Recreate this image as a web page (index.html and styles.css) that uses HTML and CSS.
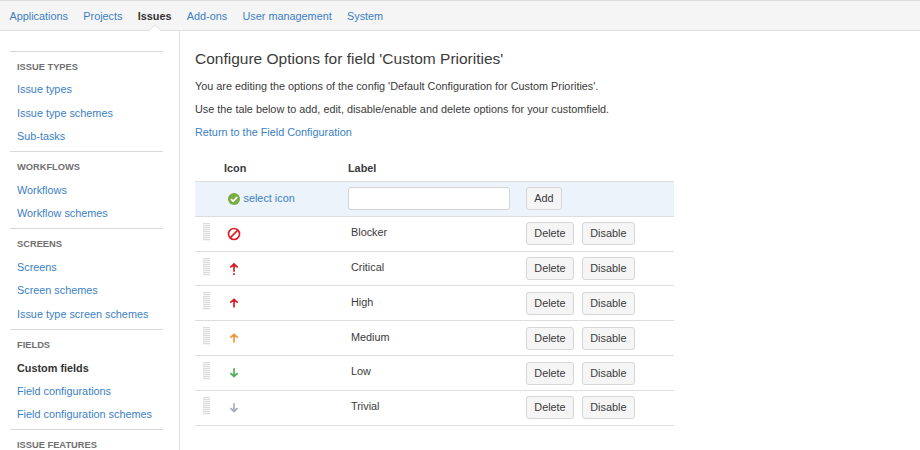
FILE: index.html
```
<!DOCTYPE html>
<html lang="en">
<head>
<meta charset="utf-8">
<title>Configure Options</title>
<link rel="stylesheet" href="styles.css">
</head>
<body>
<header class="topnav">
  <a href="#">Applications</a>
  <a href="#">Projects</a>
  <a href="#" class="active">Issues<svg class="notch" width="14" height="8" viewBox="0 0 14 8"><path d="M0.5 7 L7 .8 L13.5 7 V8 H.5Z" fill="#fff"/><path d="M0.5 7 L7 .8 L13.5 7" fill="none" stroke="#e0e0e0"/></svg></a>
  <a href="#">Add-ons</a>
  <a href="#">User management</a>
  <a href="#">System</a>
</header>
<div class="page">
  <nav class="sidebar">
    <section class="group">
      <h2>ISSUE TYPES</h2>
      <a href="#">Issue types</a>
      <a href="#">Issue type schemes</a>
      <a href="#">Sub-tasks</a>
    </section>
    <section class="group">
      <h2>WORKFLOWS</h2>
      <a href="#">Workflows</a>
      <a href="#">Workflow schemes</a>
    </section>
    <section class="group">
      <h2>SCREENS</h2>
      <a href="#">Screens</a>
      <a href="#">Screen schemes</a>
      <a href="#">Issue type screen schemes</a>
    </section>
    <section class="group">
      <h2>FIELDS</h2>
      <a href="#" class="current">Custom fields</a>
      <a href="#">Field configurations</a>
      <a href="#">Field configuration schemes</a>
    </section>
    <section class="group">
      <h2>ISSUE FEATURES</h2>
    </section>
  </nav>
  <main class="content">
    <h1>Configure Options for field 'Custom Priorities'</h1>
    <p>You are editing the options of the config 'Default Configuration for Custom Priorities'.</p>
    <p>Use the tale below to add, edit, disable/enable and delete options for your customfield.</p>
    <p><a href="#">Return to the Field Configuration</a></p>
    <div class="table">
      <div class="row head"><span></span><b>Icon</b><b>Label</b><span></span></div>
      <div class="row add">
        <span></span>
        <a href="#" class="select"><svg width="12" height="12" viewBox="0 0 12 12"><circle cx="6" cy="6" r="6" fill="#78ad41"/><path d="M3 6.2 L5.2 8.3 L9.2 4" fill="none" stroke="#fff" stroke-width="1.8"/></svg>select icon</a>
        <input type="text" aria-label="Label">
        <div class="actions"><button>Add</button></div>
      </div>
      <div class="row">
        <i class="grip"></i>
        <svg class="icon" width="14" height="14" viewBox="0 0 14 14" fill="none" stroke="#df1f26" stroke-width="1.7"><circle cx="7" cy="7" r="5.5"/><path d="M3.2 10.8 L10.8 3.2"/></svg>
        <span class="label">Blocker</span>
        <div class="actions"><button>Delete</button><button>Disable</button></div>
      </div>
      <div class="row">
        <i class="grip"></i>
        <svg class="icon" width="14" height="14" viewBox="0 0 14 14" fill="none" stroke="#d8202c" stroke-width="1.7"><path d="M7 9.8 V2 M3.3 5.3 L7 2 L10.7 5.3 M7 11.2 V13"/><path d="M4.6 4.8 L7 2.4 L9.4 4.8Z" fill="#d8202c" stroke="none"/></svg>
        <span class="label">Critical</span>
        <div class="actions"><button>Delete</button><button>Disable</button></div>
      </div>
      <div class="row">
        <i class="grip"></i>
        <svg class="icon" width="14" height="14" viewBox="0 0 14 14" fill="none" stroke="#d8202c" stroke-width="1.7"><path d="M7 11.6 V3.2 M3.3 6.6 L7 3.3 L10.7 6.6"/><path d="M4.6 6.1 L7 3.7 L9.4 6.1Z" fill="#d8202c" stroke="none"/></svg>
        <span class="label">High</span>
        <div class="actions"><button>Delete</button><button>Disable</button></div>
      </div>
      <div class="row">
        <i class="grip"></i>
        <svg class="icon" width="14" height="14" viewBox="0 0 14 14" fill="none" stroke="#f0953a" stroke-width="1.7"><path d="M7 11.6 V3.2 M3.3 6.6 L7 3.3 L10.7 6.6"/><path d="M4.6 6.1 L7 3.7 L9.4 6.1Z" fill="#f0953a" stroke="none"/></svg>
        <span class="label">Medium</span>
        <div class="actions"><button>Delete</button><button>Disable</button></div>
      </div>
      <div class="row">
        <i class="grip"></i>
        <svg class="icon" width="14" height="14" viewBox="0 0 14 14" fill="none" stroke="#58b05c" stroke-width="1.7"><path d="M7 2.2 V10.6 M3.3 7.2 L7 10.5 L10.7 7.2"/><path d="M4.6 7.7 L7 10.1 L9.4 7.7Z" fill="#58b05c" stroke="none"/></svg>
        <span class="label">Low</span>
        <div class="actions"><button>Delete</button><button>Disable</button></div>
      </div>
      <div class="row">
        <i class="grip"></i>
        <svg class="icon" width="14" height="14" viewBox="0 0 14 14" fill="none" stroke="#a9aebb" stroke-width="1.7"><path d="M7 2.2 V10.6 M3.3 7.2 L7 10.5 L10.7 7.2"/><path d="M4.6 7.7 L7 10.1 L9.4 7.7Z" fill="#a9aebb" stroke="none"/></svg>
        <span class="label">Trivial</span>
        <div class="actions"><button>Delete</button><button>Disable</button></div>
      </div>
    </div>
  </main>
</div>
</body>
</html>
```
FILE: styles.css
```
* { box-sizing: border-box; }
body {
  margin: 0;
  height: 450px;
  overflow: hidden;
  background: #fff;
  color: #3b3b3b;
  font: 10.85px/23.2px "Liberation Sans", Arial, sans-serif;
}
a { color: #3b7fc4; text-decoration: none; }
.topnav {
  display: flex;
  gap: 15.3px;
  height: 31px;
  padding-left: 9.5px;
  line-height: 30px;
  background: #f5f5f5;
  border-top: 1px solid #dcdcdc;
  border-bottom: 1px solid #e0e0e0;
}
.topnav .active { position: relative; color: #333; font-weight: bold; }
.notch { position: absolute; left: 50%; bottom: -2px; margin-left: -7px; }
.page { display: flex; height: 419px; }
.sidebar {
  width: 180px;
  padding: 19.6px 16px 0 9.5px;
  border-right: 1px solid #e0e0e0;
}
.group {
  padding: 5px 0 3px 7.5px;
  border-top: 1px solid #d9d9d9;
}
.group h2 {
  margin: 0;
  height: 21.9px;
  line-height: 21px;
  font-size: 9.3px;
  color: #707070;
}
.group a { display: block; height: 23.2px; }
.group .current { color: #333; font-weight: bold; }
.content { padding: 16px 0 0 15px; }
h1 {
  margin: 0 0 4.5px;
  font-size: 15.5px;
  line-height: 23px;
  font-weight: normal;
}
p { margin: 0; height: 23.2px; }
.table { width: 479px; margin-top: 6.8px; }
.row {
  display: grid;
  grid-template-columns: 29px 124px 178px 1fr;
  align-items: center;
  height: 34.86px;
  border-bottom: 1px solid #ddd;
}
.head { height: 31px; }
.head b { padding-top: 5px; }
.add { background: #edf3fb; }
.select { display: flex; align-items: center; gap: 3.5px; padding-left: 4px; }
.row input {
  width: 162px;
  height: 23px;
  border: 1px solid #d4d4d4;
  border-radius: 3px;
  background: #fff;
}
.grip {
  align-self: start;
  width: 7px;
  height: 18px;
  margin: 6px 0 0 8px;
  background: repeating-linear-gradient(#dcdcdc 0 1px, #f5f5f5 1px 2px);
}
.icon { margin-left: 3px; }
.label { padding: 0 0 2px 3px; }
.actions { display: flex; gap: 8px; }
.actions button {
  height: 23px;
  padding: 0 7.3px;
  font: inherit;
  line-height: 21px;
  color: #3b3b3b;
  background: #f5f5f5;
  border: 1px solid #d6d6d6;
  border-radius: 3px;
}
```
